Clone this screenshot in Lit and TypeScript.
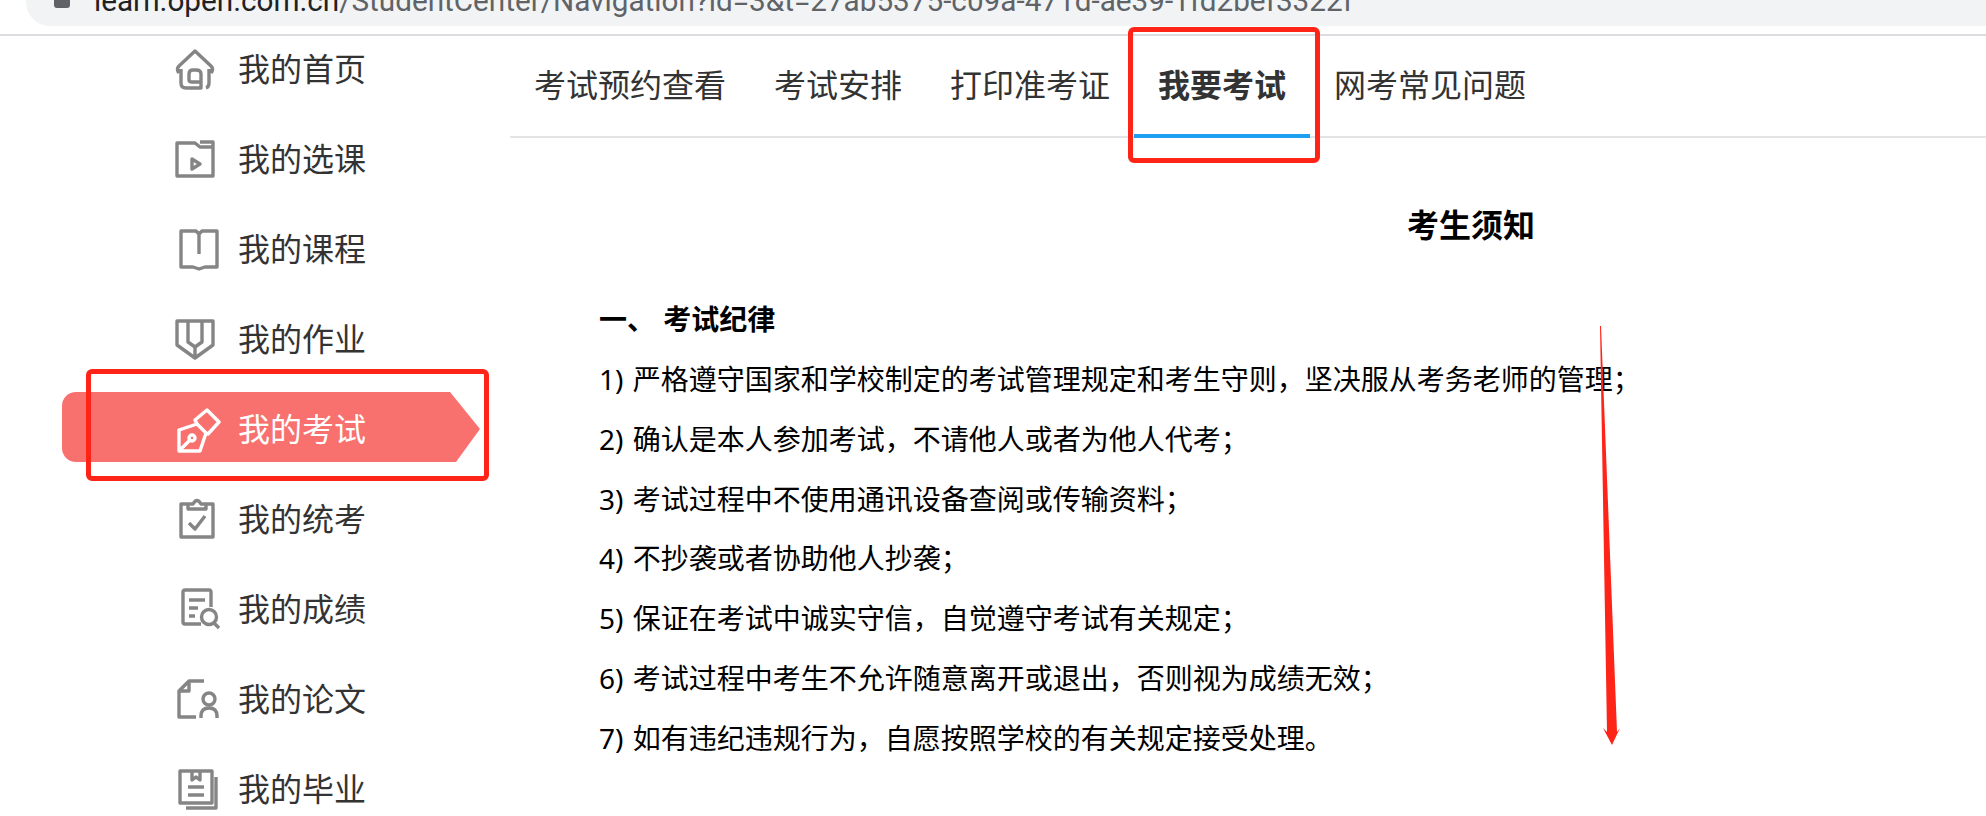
import { LitElement, css, html, svg } from 'lit'
import { customElement } from 'lit/decorators.js'
import { classMap } from 'lit/directives/class-map.js'

// sidebar icons, each one drawn in a 40x40 box
const icons: Record<string, unknown> = {
    home: svg`<path d="M4 24 Q1 20 4 17 L20 2 L36 17 Q39 20 36 24 M6 20 V34 Q6 39 11 39 H26 V25 Q26 21 21 21 H18 Q14 21 14 25 V31 Q14 33 17 33 H26 M34 20 V34 Q34 38 31 39"/>`,
    folder: svg`<path d="M2 4 H20 L25 8 H38 V37 H2 Z M25 3 H38 V8"/><path d="M17 20 L25 25 L17 30 Z"/>`,
    book: svg`<path d="M2 2 H17 L20 5 L23 2 H38 V38 H26 L20 40 L14 38 H2 Z M20 5 V25"/>`,
    pencil: svg`<path d="M2 2 H38 V26 L20 39 L2 26 Z M13 2 V23 L20 28 L27 23 V2 M20 28 V38"/>`,
    pen: svg`<path d="M2 21 L20 15 L29 24 L23 42 H2 Z M2 42 L14 30"/><circle cx="15" cy="29" r="3"/><path d="M20 15 L18 11 L30 1 L42 13 L31 25 L29 24"/>`,
    clipboard: svg`<path d="M9 5 H2 V38 H34 V5 H27 M9 5 V10 H27 V5 H22 Q18 -2 14 5 Z M10 24 L16 30 L26 17"/>`,
    report: svg`<path d="M30 18 V3 Q30 1 28 1 H4 Q2 1 2 3 V33 Q2 35 4 35 H20 M8 11 H24 M8 19 H17 M8 27 H14"/><circle cx="28" cy="28" r="7.5"/><path d="M33 34 L38 39"/>`,
    thesis: svg`<path d="M27 2 H12 L2 12 V38 H19 M12 2 V12 H2"/><circle cx="32" cy="20" r="6"/><path d="M24 39 V37 Q24 29 32 29 Q40 29 40 37 V39"/>`,
    album: svg`<path d="M2 2 H34 V34 H2 Z M14 2 V11 L18 8 L22 11 V2 M10 18 H26 M10 26 H26 M38 8 V39 H8"/>`,
}

const navItems = [
    { label: '我的首页', icon: 'home', shift: 0 },
    { label: '我的选课', icon: 'folder', shift: 0 },
    { label: '我的课程', icon: 'book', shift: 4 },
    { label: '我的作业', icon: 'pencil', shift: 0 },
    { label: '我的考试', icon: 'pen', shift: 2, active: true },
    { label: '我的统考', icon: 'clipboard', shift: 4 },
    { label: '我的成绩', icon: 'report', shift: 6 },
    { label: '我的论文', icon: 'thesis', shift: 2 },
    { label: '我的毕业', icon: 'album', shift: 3 },
]

const tabs = ['考试预约查看', '考试安排', '打印准考证', '我要考试', '网考常见问题']

const rules = [
    '1) 严格遵守国家和学校制定的考试管理规定和考生守则\uFF0C坚决服从考务老师的管理\uFF1B',
    '2) 确认是本人参加考试\uFF0C不请他人或者为他人代考\uFF1B',
    '3) 考试过程中不使用通讯设备查阅或传输资料\uFF1B',
    '4) 不抄袭或者协助他人抄袭\uFF1B',
    '5) 保证在考试中诚实守信\uFF0C自觉遵守考试有关规定\uFF1B',
    '6) 考试过程中考生不允许随意离开或退出\uFF0C否则视为成绩无效\uFF1B',
    '7) 如有违纪违规行为\uFF0C自愿按照学校的有关规定接受处理\u3002',
]

@customElement('app-root')
export class AppRoot extends LitElement {
    static styles = css`
        :host {
            display: block;
            position: relative;
            width: 1986px;
            height: 816px;
            overflow: hidden;
            background: #fff;
            font-family: "Noto Sans", "Noto Sans CJK SC", sans-serif;
        }

        /* browser chrome, cut off by the top edge */
        .chrome {
            height: 36px;
            box-sizing: border-box;
            border-bottom: 2px solid #dadce0;
            padding-left: 26px;
            overflow: hidden;
        }

        .omnibox {
            display: flex;
            align-items: flex-end;
            height: 26px;
            background: #f1f3f4;
            border-bottom-left-radius: 24px;
            padding-left: 28px;
            overflow: hidden;
        }

        .lock {
            width: 16px;
            height: 8px;
            margin-bottom: 18px;
            background: #5f6368;
            border-radius: 0 0 3px 3px;
            flex: none;
        }

        .url {
            margin-left: 24px;
            margin-bottom: 8px;
            font-family: Roboto, sans-serif;
            font-size: 29.7px;
            line-height: 34px;
            white-space: nowrap;
            color: #5f6368;
        }

        .url b {
            font-weight: 400;
            color: #202124;
        }

        .page {
            display: flex;
        }

        .sidebar {
            width: 510px;
            flex: none;
            display: flex;
            flex-direction: column;
            gap: 20px;
            margin-top: -2px;
            padding-left: 62px;
            box-sizing: border-box;
        }

        .nav {
            position: relative;
            display: flex;
            align-items: center;
            width: 418px;
            height: 70px;
            flex: none;
            padding-left: 113px;
            box-sizing: border-box;
            font-size: 32px;
            color: #333;
        }

        .nav.active {
            color: #fff;
        }

        .nav.active::before {
            content: '';
            position: absolute;
            left: 0;
            top: -2px;
            width: 418px;
            height: 70px;
            background: #f8716e;
            border-radius: 14px 0 0 14px;
            clip-path: polygon(0 0, 388px 0, 418px 37px, 394px 70px, 0 70px);
        }

        .nav-icon {
            position: relative;
            width: 40px;
            height: 40px;
            flex: none;
            fill: none;
            stroke: #858585;
            stroke-width: 3.4;
            stroke-linejoin: round;
            overflow: visible;
            filter: blur(0.4px);
        }

        .nav.active .nav-icon {
            stroke: #fff;
        }

        .nav-label {
            position: relative;
            left: -1px;
            line-height: 46px;
            white-space: nowrap;
        }

        .main {
            flex: 1;
            min-width: 0;
        }

        .tabs {
            display: flex;
            height: 102px;
            box-sizing: border-box;
            border-bottom: 2px solid #e4e4e4;
        }

        .tab {
            height: 102px;
            box-sizing: border-box;
            padding: 0 24px 5px;
            display: flex;
            align-items: center;
            font-size: 32px;
            color: #333;
            border-bottom: 4px solid transparent;
        }

        .tab.current {
            font-weight: 700;
            border-bottom-color: #1e9fef;
        }

        .notice {
            width: 1744px;
            margin-left: 89px;
            color: #000;
        }

        .title {
            margin: 63px 0 0;
            text-align: center;
            font-size: 32px;
            font-weight: 700;
            line-height: 48px;
        }

        .heading {
            margin: 40px 0 1px;
            font-size: 28px;
            font-weight: 700;
            line-height: 60px;
            white-space: pre;
            word-spacing: 1px;
        }

        .rule {
            margin: 0;
            font-size: 28px;
            line-height: 59.8px;
            white-space: nowrap;
            word-spacing: 2px;
        }

        /* hand drawn red marks over the screenshot */
        .mark {
            position: absolute;
            box-sizing: border-box;
            border: 5px solid #ff2418;
            border-radius: 6px;
        }

        .mark-nav {
            left: 86px;
            top: 369px;
            width: 403px;
            height: 112px;
        }

        .mark-tab {
            left: 1128px;
            top: 27px;
            width: 192px;
            height: 136px;
        }

        .arrow {
            position: absolute;
            left: 1590px;
            top: 320px;
            width: 40px;
            height: 430px;
            fill: #ff2418;
        }
    `;

    private navItem(item: typeof navItems[number]) {
        return html`
            <div class="${classMap({ nav: true, active: !!item.active })}">
                <svg class="nav-icon" viewBox="0 0 40 40" style="margin-left: ${item.shift}px; margin-right: ${24 - item.shift}px">
                    ${icons[item.icon]}
                </svg>
                <span class="nav-label">${item.label}</span>
            </div>
        `;
    }

    render() {
        return html`
            <div class="chrome">
                <div class="omnibox">
                    <span class="lock"></span>
                    <span class="url"><b>learn.open.com.cn</b>/StudentCenter/Navigation?id=3&amp;t=27ab5375-c09a-471d-ae39-1fd2bef3322f</span>
                </div>
            </div>
            <div class="page">
                <nav class="sidebar">${navItems.map((item) => this.navItem(item))}</nav>
                <main class="main">
                    <div class="tabs">
                        ${tabs.map((tab) => html`
                            <div class="${classMap({ tab: true, current: tab === '我要考试' })}">${tab}</div>
                        `)}
                    </div>
                    <section class="notice">
                        <h2 class="title">考生须知</h2>
                        <p class="heading">一、 考试纪律</p>
                        ${rules.map((rule) => html`<p class="rule">${rule}</p>`)}
                    </section>
                </main>
            </div>
            <div class="mark mark-nav"></div>
            <div class="mark mark-tab"></div>
            <svg class="arrow" viewBox="0 0 40 430">
                <polygon points="10,6 11,6 27,412 30,408 22,425 13,408 17,412" />
            </svg>
        `;
    }
}

declare global {
    interface HTMLElementTagNameMap {
        'app-root': AppRoot
    }
}
